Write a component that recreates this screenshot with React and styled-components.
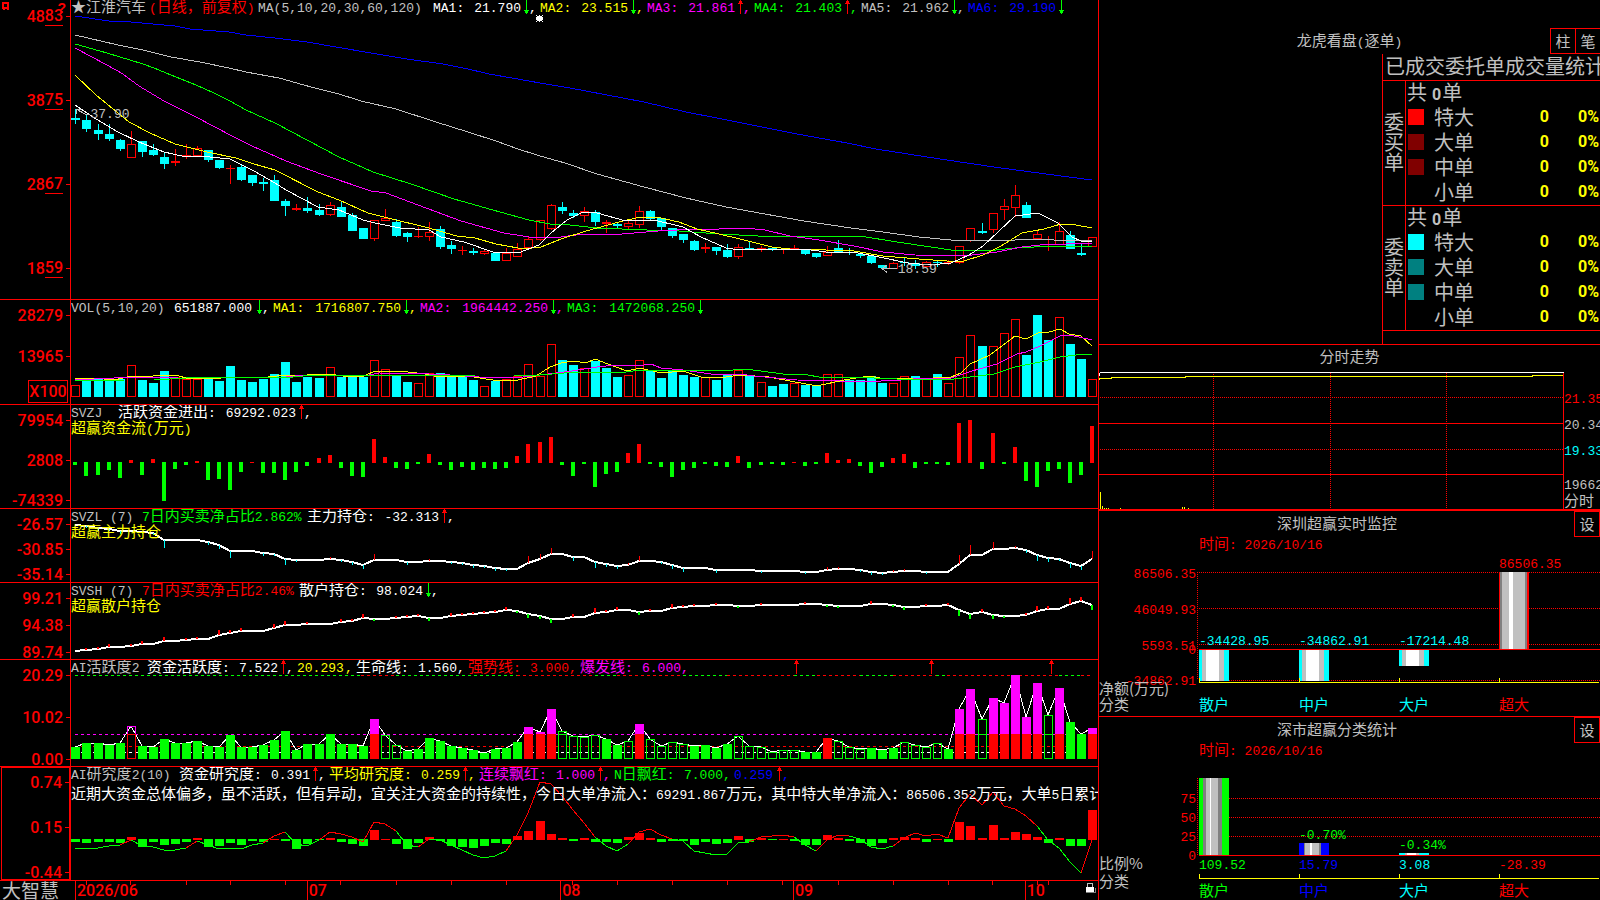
import React from "react"

import styled, { createGlobalStyle, css } from "styled-components"

const RED = "#ff0000"
const GREEN = "#00ff00"
const CYAN = "#00ffff"
const YELLOW = "#ffff00"
const MAGENTA = "#ff00ff"
const BLUE = "#0000ff"
const SILVER = "#c0c0c0"
const GRAY = "#808080"
const WHITE = "#ffffff"

const GlobalStyle = createGlobalStyle`
  * {
    box-sizing: border-box;
  }

  body {
    margin: 0;
    background: #000;
    color: ${SILVER};
    font-family: "Liberation Mono", "Noto Sans CJK SC", monospace;
    font-size: 13px;
    line-height: 17px;
    overflow: hidden;
  }
`

const Page = styled.main`
  display: grid;
  grid-template-columns: minmax(0, 1fr) 501px;
  min-height: 100vh;
`

const Charts = styled.div`
  border-right: 1px solid ${RED};
  min-width: 0;
`

const Panel = styled.section`
  display: grid;
  grid-template-columns: 70px minmax(0, 1fr);
  grid-template-rows: 100%;
  height: ${p => p.$height}px;
  border-bottom: 1px solid ${RED};
`

const Gutter = styled.div`
  position: relative;
  padding-top: ${p => (p.$main ? 6 : 5)}px;
  ${p =>
    p.$framed &&
    css`
      margin-left: 1px;
      padding-top: 4px;
      border: 1px solid ${RED};
    `}
`

const Scale = styled.div`
  display: flex;
  flex-direction: column;
  align-items: flex-end;
  gap: ${p => p.$gap}px;
`

const ScaleLabel = styled.div`
  display: flex;
  align-items: center;
  height: 20px;
  color: ${RED};
  font-family: Roboto, "Liberation Sans", sans-serif;
  font-size: 16px;
  font-weight: 500;

  &::after {
    content: "";
    width: 4px;
    height: 1px;
    margin-left: 3px;
    background: ${RED};
  }
`

const Cents = styled.span`
  height: 20px;
  line-height: 20px;
  border-bottom: 1px solid ${RED};
`

const Multiplier = styled.div`
  width: 40px;
  height: 23px;
  margin: 14px 2px 0 auto;
  border: 1px solid ${RED};
  color: ${RED};
  font-family: Roboto, "Liberation Sans", sans-serif;
  font-size: 16px;
  font-weight: 500;
  line-height: 21px;
  text-align: center;
`

const Plot = styled.div`
  position: relative;
  min-width: 0;
  border-left: 1px solid ${RED};
  overflow: hidden;
`

const Drawing = styled.svg`
  display: block;
  width: 100%;
  height: 100%;
  shape-rendering: crispEdges;
`

const Legend = styled.div`
  position: absolute;
  top: 0;
  left: 0;
  display: flex;
  gap: 3px;
  height: 17px;
  line-height: 17px;
  white-space: pre;
`

const Caption = styled.div`
  position: absolute;
  top: ${p => p.$top}px;
  left: 0;
  color: ${p => p.$color};
  white-space: nowrap;
`

const Han = styled.span`
  font-family: "Noto Sans CJK SC", sans-serif;
  font-size: 15px;
  line-height: 0;
`

const Slot = styled.span`
  display: flex;
  justify-content: space-between;
  width: ${p => p.$width}px;
  margin-right: ${p => (p.$title ? 4 : 0)}px;
  color: ${p => p.$color};
`

const Readout = styled.span`
  display: flex;
  color: ${p => p.$color};
`

const Comma = styled.span`
  width: 8px;
`

const Note = styled.span`
  position: absolute;
  top: ${p => p.$top}px;
  left: ${p => p.$left}%;
  color: ${SILVER};
`

const TimeAxis = styled.div`
  display: grid;
  grid-template-columns: 70px minmax(0, 1fr);
  height: 19px;
`

const Brand = styled.div`
  padding-left: 2px;
  font-family: "Noto Sans CJK SC", sans-serif;
  font-size: 19px;
  line-height: 17px;
  white-space: nowrap;
`

const Months = styled.div`
  position: relative;
  display: flex;
  padding-left: 5px;
`

const Month = styled.div`
  flex: ${p => p.$days} 1 0;
  padding-left: 1px;
  border-left: 1px solid ${RED};
  color: ${RED};
  font-family: Roboto, "Liberation Sans", sans-serif;
  font-size: 16px;
  font-weight: 500;
  line-height: 19px;
`

const Ticks = styled.svg`
  position: absolute;
  top: 0;
  left: 0;
  width: 100%;
  height: 4px;
  shape-rendering: crispEdges;
`

const Lock = styled.svg`
  position: absolute;
  top: 1px;
  right: 2px;
`

const CornerMark = styled.svg`
  position: absolute;
  top: 0;
  left: 0;
`

const Help = styled.span`
  position: absolute;
  top: 0;
  right: 4px;
  color: ${RED};
  font-family: "Liberation Sans", sans-serif;
  font-size: 14px;
  font-weight: 700;
  line-height: 16px;
`

const Side = styled.div`
  min-width: 0;
  overflow: hidden;
`

const SideSection = styled.section`
  height: ${p => p.$height}px;
  border-bottom: ${p => p.$rule}px solid ${RED};
`

const TitleBar = styled.div`
  display: grid;
  grid-template-columns: ${p => (p.$even ? "1fr auto 1fr" : "1fr auto")};
  grid-template-rows: 26px;
  align-items: center;
  padding-top: ${p => p.$pad}px;
`

const Title = styled.h2`
  height: 24px;
  margin: 0;
  font-size: 13px;
  font-weight: 400;
  line-height: 28px;
  text-align: center;
`

const Buttons = styled.div`
  display: flex;
  justify-content: flex-end;
  margin-right: -1px;
`

const Button = styled.button`
  width: 26px;
  height: 26px;
  margin-left: -1px;
  padding: 0;
  border: 1px solid ${RED};
  background: #000;
  color: ${SILVER};
  font-family: "Noto Sans CJK SC", sans-serif;
  font-size: 15px;
  line-height: 22px;
`

const OrderStats = styled.div`
  width: 218px;
  height: 290px;
  margin-left: auto;
  border-left: 1px solid ${RED};
  font-family: "Noto Sans CJK SC", sans-serif;
  font-size: 20px;
  overflow: hidden;
`

const StatsHeading = styled.h3`
  height: 26px;
  margin: 0;
  padding-left: 2px;
  font-size: 20px;
  font-weight: 400;
  line-height: 24px;
  white-space: nowrap;
`

const StatsTable = styled.table`
  width: 217px;
  border-spacing: 0;
  table-layout: fixed;
  line-height: 20px;

  th,
  td {
    height: 25px;
    padding: 0 0 2px;
    font-weight: 400;
    text-align: left;
    white-space: nowrap;
  }

  tbody tr:first-child > * {
    border-top: 1px solid ${RED};
  }

  tbody:last-child {
    box-shadow: 0 1px 0 ${RED};
  }
`

const SideHead = styled.th`
  border-right: 1px solid ${RED};

  span {
    display: block;
    width: 20px;
    margin-left: 1px;
    white-space: normal;
    word-break: break-all;
  }
`

const Total = styled.td`
  && {
    padding-left: 1px;
  }

  b {
    margin: 0 1px 0 5px;
    font-family: Roboto, "Liberation Sans", sans-serif;
    font-size: 16px;
    line-height: 0;
  }
`

const Swatch = styled.span`
  display: block;
  width: 16px;
  height: 16px;
  margin-left: 2px;
  background: ${p => p.$color};
`

const Figure = styled.td`
  && {
    padding: 0 1px 1px 0;
    color: ${YELLOW};
    font-family: Roboto, "Liberation Sans", sans-serif;
    font-size: 16px;
    font-weight: 700;
    text-align: right;
  }
`

const SideDrawing = styled.svg`
  display: block;
  shape-rendering: crispEdges;

  .han {
    font-family: "Noto Sans CJK SC", sans-serif;
    font-size: 15px;
  }
`

const Stamp = styled.div`
  height: 16px;
  padding-left: 100px;
  color: ${RED};
  line-height: 17px;
  white-space: pre;
`

const HAN = /([\u2600-\u9fff\uff00-\uffef]+)/

const Mixed = ({ children }) =>
  children
    .split(HAN)
    .map((part, i) => (i % 2 ? <Han key={i}>{part}</Han> : part))

// han glyphs take 15px, everything else takes an 8px cell
const textWidth = text =>
  [...text].reduce((sum, ch) => sum + (HAN.test(ch) ? 15 : 8), 0)

const Arrow = ({ up }) => (
  <svg width="8" height="15" viewBox="0 0 8 15" shapeRendering="crispEdges">
    {up ? (
      <path d="M5 0h1v1h1v2h1v1H6v10H5V4H3V3h1V1h1z" fill={RED} />
    ) : (
      <path d="M5 0h1v10h2v1H7v2H6v1H5v-1H4v-2H3v-1h2z" fill={GREEN} />
    )}
  </svg>
)

const Value = ({ color, label, value, arrow, last }) => (
  <Readout $color={color}>
    <Slot $color={color} $width={textWidth(label ? label + " " + value : value)}>
      {label && (
        <span>
          <Mixed>{label}</Mixed>
        </span>
      )}
      <span>{value}</span>
    </Slot>
    {arrow && <Arrow up={arrow === "up"} />}
    {!last && <Comma>,</Comma>}
  </Readout>
)

const LegendTitle = ({ children }) => (
  <Slot $title $color={SILVER} $width={textWidth(children)}>
    <span>
      <Mixed>{children}</Mixed>
    </span>
  </Slot>
)

const barX = i => Math.round(75.4 + i * 11.05)

const Canvas = ({ top, height, children }) => (
  <Drawing viewBox={`71 ${top} 1027 ${height}`} preserveAspectRatio="none">
    {children}
  </Drawing>
)

const Line = ({ points, color, width = 1 }) => (
  <polyline points={points} fill="none" stroke={color} strokeWidth={width} />
)

const Box = ({ i, top, bottom, color }) => (
  <rect
    x={barX(i) - 3.5}
    y={top + 0.5}
    width={8}
    height={Math.max(bottom - top - 1, 1)}
    fill="none"
    stroke={color}
  />
)

// direction, high, body top, body bottom, low
const candles = [
  ["c", 109, 118, 120, 124], ["c", 115, 120, 129, 132], ["c", 124, 130, 134, 140],
  ["c", 124, 134, 139, 141], ["c", 139, 140, 149, 151], ["r", 131, 144, 158, 158],
  ["c", 141, 141, 152, 157], ["c", 144, 150, 155, 156], ["c", 153, 157, 164, 169],
  ["r", 149, 161, 163, 166], ["r", 144, 155, 157, 159], ["r", 146, 148, 156, 157],
  ["c", 150, 150, 160, 162], ["c", 160, 160, 168, 169], ["r", 165, 168, 169, 184],
  ["c", 165, 167, 180, 181], ["c", 175, 175, 183, 186], ["c", 178, 182, 184, 191],
  ["c", 175, 180, 201, 201], ["c", 199, 201, 206, 216], ["r", 204, 208, 210, 211],
  ["c", 197, 208, 211, 213], ["c", 204, 210, 215, 216], ["r", 202, 205, 215, 216],
  ["c", 201, 207, 217, 217], ["c", 213, 215, 231, 231], ["c", 228, 228, 239, 239],
  ["r", 220, 220, 239, 241], ["r", 209, 218, 221, 221], ["c", 219, 222, 236, 237],
  ["c", 232, 233, 237, 242], ["r", 227, 236, 237, 238], ["r", 222, 232, 237, 241],
  ["c", 226, 229, 247, 249], ["c", 241, 245, 249, 254], ["r", 246, 250, 251, 255],
  ["c", 248, 251, 253, 255], ["r", 249, 251, 254, 255], ["c", 253, 253, 261, 261],
  ["r", 248, 253, 261, 261], ["r", 243, 249, 257, 257], ["r", 236, 239, 248, 248],
  ["r", 220, 220, 240, 241], ["r", 204, 205, 229, 230], ["c", 202, 207, 211, 214],
  ["c", 210, 213, 216, 218], ["r", 207, 211, 216, 222], ["c", 210, 212, 222, 226],
  ["r", 220, 222, 224, 233], ["c", 222, 224, 226, 229], ["r", 220, 223, 227, 229],
  ["r", 206, 211, 225, 228], ["c", 210, 211, 219, 220], ["c", 218, 218, 227, 230],
  ["c", 228, 228, 236, 238], ["c", 234, 234, 240, 243], ["c", 240, 241, 250, 251],
  ["r", 243, 247, 249, 253], ["c", 247, 247, 251, 255], ["c", 244, 250, 257, 258],
  ["r", 244, 247, 257, 259], ["c", 241, 248, 249, 249], ["r", 246, 248, 249, 252],
  ["c", 247, 248, 249, 251], ["r", 248, 249, 250, 254], ["r", 245, 248, 249, 249],
  ["c", 249, 249, 254, 255], ["c", 253, 253, 257, 258], ["r", 246, 252, 256, 256],
  ["c", 240, 248, 252, 252], ["c", 248, 252, 253, 255], ["c", 253, 254, 256, 258],
  ["c", 256, 256, 263, 264], ["c", 265, 265, 268, 268], ["r", 262, 263, 269, 269],
  ["c", 258, 262, 263, 266], ["c", 260, 263, 266, 269], ["r", 261, 262, 267, 267],
  ["c", 261, 262, 263, 267], ["r", 260, 262, 263, 265], ["r", 246, 246, 263, 264],
  ["r", 228, 228, 241, 242], ["c", 223, 231, 233, 234], ["r", 213, 213, 230, 233],
  ["r", 199, 206, 210, 220], ["r", 185, 195, 208, 217], ["c", 202, 205, 218, 218],
  ["r", 230, 234, 239, 239], ["r", 236, 244, 245, 251], ["r", 222, 231, 245, 245],
  ["c", 231, 235, 249, 249], ["c", 244, 253, 255, 256], ["r", 237, 237, 247, 247],
]

const averages = [
  [BLUE, "75,16 109,21 131,22 175,26 190,29 229,32 246,35 275,38 307,42 336,47 371,53 407,59 443,64 468,69 489,74 529,81 540,83 570,88 644,102 686,112 722,119 797,134 847,143 876,149 940,159 1001,168 1061,176 1092,180"],
  [SILVER, "75,35 118,45 143,50 171,57 200,62 229,68 246,72 279,78 311,87 339,94 361,101 396,109 436,122 468,132 496,141 518,149 540,156 565,163 597,174 644,187 686,198 726,207 776,216 804,221 851,228 883,232 919,237 951,240 1015,240 1036,239 1054,240 1092,240"],
  [GREEN, "75,44 107,53 143,64 154,68 171,75 196,85 214,93 230,101 246,110 275,123 307,140 339,157 373,172 411,184 454,199 500,212 529,220 550,224 561,224 597,228 647,230 679,231 719,234 758,236 860,236 897,242 951,250 986,251 1015,248 1054,246 1092,246"],
  [MAGENTA, "75,48 107,65 123,74 139,86 164,101 196,117 232,136 252,146 286,161 321,174 371,191 386,193 418,205 461,221 504,233 529,237 540,238 561,237 583,234 622,234 658,231 697,229 719,229 744,228 765,230 790,236 819,240 854,246 883,252 915,255 951,256 972,255 997,252 1022,247 1040,245 1092,243"],
  [YELLOW, "75,75 96,95 118,113 129,122 150,133 175,144 207,152 236,158 254,164 275,170 318,192 339,200 368,213 396,220 425,227 457,236 475,238 496,244 518,248 532,248 541,247 561,239 586,231 619,222 640,217 656,217 679,222 697,229 719,234 740,239 772,247 790,249 826,250 854,251 883,256 919,259 961,262 983,255 1001,246 1022,233 1044,229 1061,224 1076,225 1092,228"],
  [WHITE, "75,105 96,119 118,132 139,142 164,152 186,157 200,156 230,159 254,171 275,183 286,190 318,207 339,210 363,220 375,223 400,228 429,230 441,237 464,242 493,252 518,253 539,245 551,233 567,220 583,212 597,213 626,221 654,220 683,227 701,237 726,248 740,250 772,249 804,249 826,252 858,253 879,257 908,263 929,265 951,263 969,255 983,246 1015,216 1038,213 1058,223 1072,237 1081,241 1092,241"],
]

// positive closes up (red), negative closes down (cyan)
const volumes = [
  12, -17, -18, -17, -18, 32, -17, -14, -26, 20, 18, 18, -19, -16, -31, -17,
  -15, -18, -23, -35, -15, -20, -19, 30, -20, -20, -20, 37, 28, -22, -15, 14,
  24, -24, -20, -20, -17, 11, -16, 18, 21, 33, 21, 53, -37, -32, 29, -36, -29,
  -20, 22, 37, -26, -19, -26, -22, -20, 20, -17, -22, 27, -21, 15, -11, -13,
  14, -12, -11, 23, 23, -17, -17, -21, -14, 14, 21, -21, 19, -23, 14, 40, 62,
  -51, 51, 64, 78, -42, -82, -57, 80, -53, -38, 18,
]

const volumeAverages = [
  [YELLOW, "75,378 93,378 114,380 132,376 146,377 161,375 179,376 186,378 221,378 268,377 286,375 307,375 329,374 343,376 364,376 375,371 400,371 425,374 439,377 468,376 486,379 500,381 518,380 536,376 550,367 561,363 574,361 586,363 595,359 608,364 627,371 640,368 661,373 683,371 701,377 726,377 740,375 769,377 790,381 817,386 844,380 869,376 886,379 933,378 951,377 961,373 970,364 990,355 1015,336 1026,339 1038,333 1049,332 1060,329 1069,334 1081,336 1092,346"],
  [MAGENTA, "75,380 114,378 179,377 214,377 271,378 286,377 304,375 336,375 364,376 379,373 429,374 450,375 479,377 514,378 532,376 572,371 597,367 615,365 644,365 651,364 661,368 683,370 711,374 740,374 754,376 797,380 840,381 861,382 901,380 926,378 951,378 972,371 997,364 1017,354 1026,352 1040,346 1060,336 1070,335 1092,340"],
  [GREEN, "75,381 125,380 154,380 186,378 214,377 293,377 314,375 371,375 429,375 475,376 514,376 540,375 576,372 626,372 640,370 686,370 733,370 744,369 761,371 783,374 808,375 819,377 851,377 897,379 954,379 994,374 1015,367 1040,362 1060,357 1076,355 1092,354"],
]

const flows = [
  -3, -14, -13, -8, -16, 3, -13, 4, -39, -7, -3, 2, -18, -17, -28, -10, 1, -11,
  -11, -18, -10, -4, 5, 8, -6, -14, -15, 24, 6, -6, -7, -2, 9, -3, -8, -5, -8,
  -6, -7, -6, 7, 19, 21, 26, -3, -14, -2, -25, -12, -10, 10, 19, -2, -5, -15,
  -8, -6, -2, -4, -5, 7, -6, -3, -2, -3, 1, -4, -2, 10, 3, 4, -4, -11, -5, 5,
  9, -6, -2, -2, -3, 40, 43, -7, 30, -2, 16, -19, -25, -9, -7, -21, -13, 37,
]

const mainHolding = [
  525, 526, 528, 529, 531, 531, 532, 533, 540, 540, 540, 540, 542, 545, 551,
  551, 551, 553, 554, 559, 560, 560, 560, 559, 560, 562, 565, 560, 560, 560,
  562, 562, 561, 561, 562, 563, 565, 566, 568, 569, 569, 563, 559, 554, 554,
  557, 557, 562, 564, 566, 565, 561, 561, 562, 565, 568, 568, 568, 570, 570,
  570, 570, 571, 571, 571, 571, 572, 572, 570, 569, 569, 570, 572, 573, 572,
  571, 571, 572, 572, 572, 564, 555, 555, 549, 549, 548, 550, 555, 558, 559,
  563, 566, 559,
]

const retailHolding = [
  651, 650, 649, 647, 647, 646, 644, 644, 641, 641, 640, 639, 639, 635, 633,
  631, 631, 631, 628, 625, 625, 624, 624, 624, 622, 621, 618, 619, 619, 618,
  617, 616, 618, 618, 616, 615, 614, 613, 612, 610, 611, 614, 616, 619, 619,
  617, 617, 613, 612, 610, 610, 612, 611, 611, 608, 607, 606, 606, 605, 605,
  606, 606, 605, 605, 605, 605, 604, 604, 605, 606, 606, 606, 604, 604, 605,
  607, 607, 606, 606, 605, 610, 614, 612, 615, 616, 616, 615, 611, 609, 609,
  604, 601, 605,
]

// g solid green, G hollow green, R solid red, H hollow red
const activity =
  "g12 g16 g16 g14 g16 H33 g13 g12 g20 g16 g16 g18 g13 g12 g24 g12 g12 g14 g19 g28 g9 g15 g15 g25 g15 g15 g13 R40 G24 G14 g8 g10 g21 g18 g13 g11 g9 g6 g10 g11 g17 R32 R27 R50 G28 G23 G22 G24 g20 g14 G18 R35 G20 G13 G17 G15 g13 g14 g11 g15 G23 G13 G12 G7 G9 G9 g7 g7 R21 G18 G12 G10 g11 g9 g11 G17 G14 G12 G16 g10 R50 R70 G40 R61 R56 R84 R42 R76 G44 R71 g37 g25 R31"
    .split(" ")
    .map(s => ({ kind: s[0], h: Number(s.slice(1)) }))

const crestStops = [
  75, 361, 396, 517, 595, 617, 683, 727, 794, 817, 860, 893, 936, 947, 1059,
  1081, 1092,
]

const research = [
  -3, -4, -3, -3, -4, 3, -8, -3, -6, -5, -3, 2, -8, -7, -4, -6, -2, -3, 1, -2,
  -10, -5, -1, 2, -3, -5, -7, 10, 1, -5, -10, -4, 3, -2, -7, -8, -9, -7, -4,
  -5, 4, 9, 19, 6, 2, -2, 2, -3, -3, -4, 3, 7, 2, -3, -2, -2, -6, -3, -5, -4,
  4, -3, 2, -1, 1, -2, -6, -6, 5, 2, -2, -4, -7, -4, 2, 3, 2, -3, 1, -3, 18,
  14, 2, 15, 2, 8, 6, 3, -4, 2, -7, -7, 30,
]

const researchLine = [
  848, 849, 848, 846, 845, 840, 846, 847, 850, 850, 848, 841, 845, 849, 848,
  849, 845, 843, 836, 832, 844, 846, 840, 832, 834, 837, 842, 822, 824, 831,
  845, 847, 839, 840, 845, 850, 855, 858, 856, 851, 835, 813, 782, 784, 796,
  810, 823, 837, 846, 851, 844, 832, 829, 835, 839, 841, 851, 853, 855, 854,
  843, 842, 837, 836, 835, 837, 845, 851, 840, 835, 836, 839, 847, 849, 846,
  838, 833, 836, 834, 838, 808, 794, 805, 792, 806, 809, 816, 826, 840, 848,
  862, 873, 840,
]

const redSpans = [
  [4, 5], [10, 11], [17, 19], [22, 29], [31, 32], [39, 47], [50, 54], [61, 65],
  [67, 70], [74, 87], [91, 92],
]

const Axis = ({ labels, gap }) => (
  <Scale $gap={gap}>
    {labels.map(label => (
      <ScaleLabel key={label}>{label}</ScaleLabel>
    ))}
  </Scale>
)

const PricePanel = () => (
  <Panel $height={300}>
    <Gutter $main>
      <CornerMark width="12" height="12" shapeRendering="crispEdges">
        <path d="M3 3h5v5H3zM3 9h2M7 9h2" fill="none" stroke={RED} strokeWidth="2" />
      </CornerMark>
      <Help>?</Help>
      <Scale $gap={64}>
        {["48 83", "38 75", "28 67", "18 59"].map(price => (
          <ScaleLabel key={price}>
            {price.slice(0, 2)}
            <Cents>{price.slice(3)}</Cents>
          </ScaleLabel>
        ))}
      </Scale>
    </Gutter>
    <Plot>
      <Canvas top={0} height={299}>
        {candles.map(([dir, high, top, bottom, low], i) => {
          const x = barX(i)
          const color = dir === "c" ? CYAN : RED
          const flat = dir === "c" || bottom - top < 3
          return (
            <g key={i}>
              <rect x={x} y={high} width={1} height={top - high} fill={color} />
              <rect x={x} y={bottom} width={1} height={low - bottom} fill={color} />
              {flat ? (
                <rect x={x - 4} y={top} width={9} height={bottom - top} fill={color} />
              ) : (
                <Box i={i} top={top} bottom={bottom} color={color} />
              )}
            </g>
          )
        })}
        {averages.map(([color, points]) => (
          <Line key={color} color={color} points={points} />
        ))}
        <path
          d="M76 109l9 5h5M76 109v5M76 109h5M897 268.5h-15M887 265l-5 3.5 5 4"
          fill="none"
          stroke={SILVER}
        />
        <path
          d="M537 16h5v5h-5zM536 17h7v3h-7zM539 15h1v7h-1zM536 15h1v1h-1zM542 15h1v1h-1zM536 21h1v1h-1zM542 21h1v1h-1z"
          fill={WHITE}
        />
      </Canvas>
      <Legend>
        <Slot $color={SILVER} $width={75}>
          <span>
            <Mixed>★江淮汽车</Mixed>
          </span>
        </Slot>
        <Slot $color={RED} $width={106}>
          <span>
            <Mixed>(日线，前复权)</Mixed>
          </span>
        </Slot>
        <LegendTitle>MA(5,10,20,30,60,120)</LegendTitle>
        <Value color={WHITE} label="MA1:" value="21.790" arrow="down" />
        <Value color={YELLOW} label="MA2:" value="23.515" arrow="down" />
        <Value color={MAGENTA} label="MA3:" value="21.861" arrow="up" />
        <Value color={GREEN} label="MA4:" value="21.403" arrow="up" />
        <Value color={SILVER} label="MA5:" value="21.962" arrow="down" />
        <Value color={BLUE} label="MA6:" value="29.190" arrow="down" last />
      </Legend>
      <Note $top={106} $left={1.9}>
        37.90
      </Note>
      <Note $top={261} $left={80.5}>
        18.59
      </Note>
    </Plot>
  </Panel>
)

const VolumePanel = () => (
  <Panel $height={105}>
    <Gutter>
      <Axis labels={["28279", "13965"]} gap={21} />
      <Multiplier>X100</Multiplier>
    </Gutter>
    <Plot>
      <Canvas top={300} height={104}>
        {volumes.map((v, i) =>
          v > 0 ? (
            <Box key={i} i={i} top={397 - v} bottom={397} color={RED} />
          ) : (
            <rect key={i} x={barX(i) - 4} y={397 + v} width={9} height={-v} fill={CYAN} />
          )
        )}
        {volumeAverages.map(([color, points]) => (
          <Line key={color} color={color} points={points} />
        ))}
      </Canvas>
      <Legend>
        <LegendTitle>VOL(5,10,20)</LegendTitle>
        <Value color={WHITE} value="651887.000" arrow="down" />
        <Value color={YELLOW} label="MA1:" value="1716807.750" arrow="down" />
        <Value color={MAGENTA} label="MA2:" value="1964442.250" arrow="down" />
        <Value color={GREEN} label="MA3:" value="1472068.250" arrow="down" last />
      </Legend>
    </Plot>
  </Panel>
)

const FlowPanel = () => (
  <Panel $height={104}>
    <Gutter>
      <Axis labels={["79954", "2808", "-74339"]} gap={20} />
    </Gutter>
    <Plot>
      <Canvas top={405} height={103}>
        {flows.map((v, i) => (
          <rect
            key={i}
            x={barX(i) - 2}
            y={v > 0 ? 463 - v : 462}
            width={4}
            height={Math.abs(v)}
            fill={v > 0 ? RED : GREEN}
          />
        ))}
      </Canvas>
      <Legend>
        <LegendTitle>{"SVZJ "}</LegendTitle>
        <Value color={WHITE} label="活跃资金进出:" value="69292.023" arrow="up" />
      </Legend>
      <Caption $top={16} $color={YELLOW}>
        <Mixed>超赢资金流(万元)</Mixed>
      </Caption>
    </Plot>
  </Panel>
)

const Trend = ({ data, down, tick }) => (
  <>
    <Line
      color={WHITE}
      width={2}
      points={data.map((y, i) => `${barX(i)},${y}`).join(" ")}
    />
    {data.map((y, i) => {
      const step = i ? y - data[i - 1] : 0
      if (!step) return null
      const length = Math.abs(step) + 1
      return (
        <rect
          key={i}
          x={barX(i) - (tick - 1)}
          y={step > 0 ? y : y - length}
          width={tick}
          height={length}
          fill={step > 0 ? down : RED}
        />
      )
    })}
  </>
)

const MainHoldingPanel = () => (
  <Panel $height={74}>
    <Gutter>
      <Axis labels={["-26.57", "-30.85", "-35.14"]} gap={5} />
    </Gutter>
    <Plot>
      <Canvas top={509} height={73}>
        <Trend data={mainHolding} down={CYAN} tick={1} />
      </Canvas>
      <Legend>
        <LegendTitle>SVZL (7)</LegendTitle>
        <Slot $color={GREEN} $width={162}>
          <span>
            <Mixed>7日内买卖净占比2.862%</Mixed>
          </span>
        </Slot>
        <Value color={WHITE} label="主力持仓:" value="-32.313" arrow="up" />
      </Legend>
      <Caption $top={16} $color={YELLOW}>
        <Mixed>超赢主力持仓</Mixed>
      </Caption>
    </Plot>
  </Panel>
)

const RetailHoldingPanel = () => (
  <Panel $height={77}>
    <Gutter>
      <Axis labels={["99.21", "94.38", "89.74"]} gap={7} />
    </Gutter>
    <Plot>
      <Canvas top={583} height={76}>
        <Trend data={retailHolding} down={GREEN} tick={2} />
      </Canvas>
      <Legend>
        <LegendTitle>SVSH (7)</LegendTitle>
        <Slot $color={RED} $width={154}>
          <span>
            <Mixed>7日内买卖净占比2.46%</Mixed>
          </span>
        </Slot>
        <Value color={WHITE} label="散户持仓:" value="98.024" arrow="down" />
      </Legend>
      <Caption $top={16} $color={YELLOW}>
        <Mixed>超赢散户持仓</Mixed>
      </Caption>
    </Plot>
  </Panel>
)

const ActivityBar = ({ kind, h, i }) => {
  const x = barX(i) - 4
  const top = 759 - h
  if (kind === "g") {
    return <rect x={x} y={top} width={9} height={h} fill={GREEN} />
  }
  if (kind === "R") {
    const base = Math.min(h, 25)
    return (
      <>
        <rect x={x} y={top} width={9} height={h - base} fill={MAGENTA} />
        <rect x={x} y={759 - base} width={9} height={base} fill={RED} />
      </>
    )
  }
  if (kind === "H") {
    return (
      <>
        <Box i={i} top={734} bottom={759} color={RED} />
        <path d={`M${x + 0.5} 734V${top + 0.5}h8V734`} fill="none" stroke={MAGENTA} />
      </>
    )
  }
  return (
    <>
      <Box i={i} top={top} bottom={759} color={GREEN} />
      {h > 25 && <rect x={x} y={734} width={9} height={1} fill={GREEN} />}
    </>
  )
}

const ActivityPanel = () => (
  <Panel $height={107}>
    <Gutter>
      <Axis labels={["20.29", "10.02", "0.00"]} gap={22} />
    </Gutter>
    <Plot>
      <Canvas top={660} height={106}>
        {crestStops.slice(1).map((x, i) => (
          <path
            key={x}
            d={`M${crestStops[i]} 675.5H${x}`}
            stroke={i % 2 ? RED : GREEN}
            strokeDasharray="3 3"
          />
        ))}
        <path d="M75 734.5H1097" stroke={MAGENTA} strokeDasharray="3 3" />
        <path d="M75 746.5H1097" stroke={RED} strokeDasharray="3 3" />
        <path d="M75 752.5H1097" stroke={WHITE} strokeDasharray="3 3" />
        <Line
          color={WHITE}
          points={activity.map(({ h }, i) => `${barX(i)},${759 - h}`).join(" ")}
        />
        {activity.map((bar, i) => (
          <ActivityBar key={i} i={i} {...bar} />
        ))}
        {[796, 931, 1051].map(x => (
          <path
            key={x}
            d={`M${x} 660h1v1h1v2h1v1h-2v10h-1v-10h-2v-1h1v-2h1z`}
            fill={RED}
          />
        ))}
      </Canvas>
      <Legend>
        <LegendTitle>AI活跃度2</LegendTitle>
        <Value color={WHITE} label="资金活跃度:" value="7.522" arrow="up" />
        <Value color={YELLOW} value="20.293" />
        <Value color={WHITE} label="生命线:" value="1.560" />
        <Value color={RED} label="强势线:" value="3.000" />
        <Value color={MAGENTA} label="爆发线:" value="6.000" />
      </Legend>
    </Plot>
  </Panel>
)

const ResearchPanel = () => (
  <Panel $height={114}>
    <Gutter $framed>
      <Axis labels={["0.74", "0.15", "-0.44"]} gap={25} />
    </Gutter>
    <Plot>
      <Caption $top={20} $color={WHITE}>
        <Mixed>
          近期大资金总体偏多，虽不活跃，但有异动，宜关注大资金的持续性，今日大单净流入：69291.867万元，其中特大单净流入：86506.352万元，大单5日累计
        </Mixed>
      </Caption>
      <Canvas top={767} height={113}>
        {research.map((v, i) => (
          <rect
            key={i}
            x={barX(i) - 4}
            y={v > 0 ? 840 - v : 839}
            width={9}
            height={Math.abs(v)}
            fill={v > 0 ? RED : GREEN}
          />
        ))}
        {researchLine.slice(1).map((y, i) => (
          <path
            key={i}
            d={`M${barX(i)} ${researchLine[i]}L${barX(i + 1)} ${y}`}
            stroke={redSpans.some(([a, b]) => i >= a && i < b) ? RED : GREEN}
          />
        ))}
      </Canvas>
      <Legend>
        <LegendTitle>AI研究度2(10)</LegendTitle>
        <Value color={WHITE} label="资金研究度:" value="0.391" arrow="up" />
        <Value color={YELLOW} label="平均研究度:" value="0.259" arrow="up" />
        <Value color={MAGENTA} label="连续飘红:" value="1.000" arrow="up" />
        <Value color={GREEN} label="N日飘红:" value="7.000" />
        <Value color={BLUE} value="0.259" arrow="up" />
      </Legend>
    </Plot>
  </Panel>
)

const Timeline = () => (
  <TimeAxis>
    <Brand>大智慧</Brand>
    <Months>
      <Month $days={232}>2026/06</Month>
      <Month $days={254}>07</Month>
      <Month $days={233}>08</Month>
      <Month $days={232}>09</Month>
      <Month $days={72}>10</Month>
      <Ticks viewBox="70 0 1028 4" preserveAspectRatio="none">
        {[86, 130, 186, 230, 285, 340, 396, 451, 506, 572, 617, 672, 727, 782, 838, 893, 948, 992, 1037, 1048].map(x => (
          <rect key={x} x={x} y={0} width={1} height={4} fill={RED} />
        ))}
      </Ticks>
      <Lock width="11" height="12" shapeRendering="crispEdges">
        <path d="M2.5 5V1.5h5V5" fill="none" stroke={SILVER} />
        <path d="M1 5h8v5H1z" fill={WHITE} />
        <path d="M1 10.5h9.5V6" fill="none" stroke={GRAY} />
      </Lock>
    </Months>
  </TimeAxis>
)

const orders = [
  { side: "委买单", colors: [RED, "#800000", "#800000", "#000"] },
  { side: "委卖单", colors: [CYAN, "#008080", "#008080", "#000"] },
]

const OrderTable = () => (
  <OrderStats>
    <StatsHeading id="order-stats">已成交委托单成交量统计</StatsHeading>
    <StatsTable aria-labelledby="order-stats">
      <colgroup>
        <col width="23" />
        <col width="28" />
        <col />
        <col width="40" />
        <col width="50" />
      </colgroup>
      {orders.map(({ side, colors }) => (
        <tbody key={side}>
          <tr>
            <SideHead rowSpan={5} scope="rowgroup">
              <span>{side}</span>
            </SideHead>
            <Total colSpan={4}>
              共<b>0</b>单
            </Total>
          </tr>
          {["特大", "大单", "中单", "小单"].map((size, i) => (
            <tr key={size}>
              <td>
                <Swatch $color={colors[i]} />
              </td>
              <th scope="row">{size}</th>
              <Figure>0</Figure>
              <Figure>0%</Figure>
            </tr>
          ))}
        </tbody>
      ))}
    </StatsTable>
  </OrderStats>
)

const Intraday = () => (
  <SideDrawing width="501" height="140" viewBox="1099 369 501 140">
    <g fill="none" stroke={RED}>
      <path d="M1099 423.5h464M1099 474.5h464M1563.5 372v137" />
      <path
        d="M1100 397.5h463M1100 449.5h463M1213.5 374v135M1330.5 373v136M1446.5 373v136"
        strokeDasharray="1 1"
      />
    </g>
    <path
      d="M1099.5 380v-1.5h11.5v-1h74v-1h347v-1h31"
      fill="none"
      stroke={YELLOW}
    />
    <path d="M1099.5 376v-2l1-1.5h463" fill="none" stroke={WHITE} />
    <path
      d="M1100.5 492v17M1102.5 506v3M1104.5 508v1M1106.5 508v1M1108.5 508v1M1120.5 508v1M1182.5 507v2M1184.5 507v2M1188.5 508v1"
      stroke={YELLOW}
    />
    <text x="1564" y="403" fill={RED}>21.35</text>
    <text x="1564" y="429" fill={SILVER}>20.34</text>
    <text x="1564" y="455" fill={CYAN}>19.33</text>
    <text x="1564" y="489" fill={SILVER}>19662</text>
    <text x="1564" y="506" fill={SILVER} className="han">分时</text>
  </SideDrawing>
)

// a bar built from vertical stripes: [colour, width]
const Cylinder = ({ x, top, height, stripes }) => {
  let left = x
  return stripes.map(([color, width], i) => {
    const start = left
    left += width
    return <rect key={i} x={start} y={top} width={width} height={height} fill={color} />
  })
}

const fallStripes = [[CYAN, 3], [SILVER, 4], [WHITE, 13], [SILVER, 5], [CYAN, 5]]
const riseStripes = [
  [RED, 1], [GRAY, 2], [SILVER, 7], [WHITE, 4], [SILVER, 12], [GRAY, 2], [RED, 2],
]

const AmountChart = () => (
  <SideDrawing width="501" height="163" viewBox="1099 553 501 163">
    <path
      d="M1199 572.5h401M1199 608.5h401M1199 644.5h401M1199 680.5h401M1197.5 572v108"
      stroke={RED}
      strokeDasharray="1 1"
    />
    <Cylinder x={1199} top={650} height={31} stripes={fallStripes} />
    <Cylinder x={1299} top={650} height={31} stripes={fallStripes} />
    <Cylinder x={1399} top={650} height={16} stripes={fallStripes} />
    <Cylinder x={1499} top={572} height={77} stripes={riseStripes} />
    <path d="M1199 649.5h401" stroke={RED} />
    <path
      d="M1199.5 678v4.5H1599M1299.5 678v4M1399.5 678v4M1499.5 678v4"
      fill="none"
      stroke={YELLOW}
    />
    <g fill={RED} textAnchor="end">
      <text x="1196" y="578">86506.35</text>
      <text x="1196" y="614">46049.93</text>
      <text x="1196" y="650">5593.51</text>
      <text x="1196" y="654">0</text>
      <text x="1196" y="685">-34862.91</text>
    </g>
    <g fill={CYAN}>
      <text x="1199" y="645">-34428.95</text>
      <text x="1299" y="645">-34862.91</text>
      <text x="1399" y="645">-17214.48</text>
      <text x="1499" y="568" fill={RED}>86506.35</text>
    </g>
    <g fill={SILVER} className="han">
      <text x="1099" y="694">净额(万元)</text>
      <text x="1099" y="710">分类</text>
      <text x="1199" y="710" fill={CYAN}>散户</text>
      <text x="1299" y="710" fill={CYAN}>中户</text>
      <text x="1399" y="710" fill={CYAN}>大户</text>
      <text x="1499" y="710" fill={RED}>超大</text>
    </g>
  </SideDrawing>
)

const RatioChart = () => (
  <SideDrawing width="501" height="141" viewBox="1099 759 501 141">
    <path
      d="M1199 798.5h401M1199 817.5h401M1199 836.5h401M1197.5 778v77"
      stroke={RED}
      strokeDasharray="1 1"
    />
    <Cylinder
      x={1199}
      top={778}
      height={77}
      stripes={[[GREEN, 4], [GRAY, 3], [SILVER, 4], [WHITE, 1], [SILVER, 7], [GRAY, 4], [GREEN, 7]]}
    />
    <Cylinder
      x={1299}
      top={843}
      height={12}
      stripes={[[BLUE, 5], [GRAY, 1], [SILVER, 5], [WHITE, 2], [SILVER, 7], [GRAY, 2], [BLUE, 8]]}
    />
    <Cylinder
      x={1399}
      top={853}
      height={2}
      stripes={[[CYAN, 6], [SILVER, 2], [WHITE, 9], [SILVER, 3], [CYAN, 10]]}
    />
    <path d="M1199 855.5h401" stroke={RED} />
    <path
      d="M1199.5 874v4.5H1599M1299.5 874v4M1399.5 874v4M1499.5 874v4"
      fill="none"
      stroke={YELLOW}
    />
    <g fill={RED} textAnchor="end">
      <text x="1196" y="803">75</text>
      <text x="1196" y="822">50</text>
      <text x="1196" y="841">25</text>
      <text x="1196" y="860">0</text>
    </g>
    <text x="1299" y="839" fill={GREEN}>-0.70%</text>
    <text x="1399" y="849" fill={GREEN}>-0.34%</text>
    <text x="1199" y="869" fill={GREEN}>109.52</text>
    <text x="1299" y="869" fill={BLUE}>15.79</text>
    <text x="1399" y="869" fill={CYAN}>3.08</text>
    <text x="1499" y="869" fill={RED}>-28.39</text>
    <g fill={SILVER} className="han">
      <text x="1099" y="869">比例%</text>
      <text x="1099" y="887">分类</text>
      <text x="1199" y="896" fill={GREEN}>散户</text>
      <text x="1299" y="896" fill={BLUE}>中户</text>
      <text x="1399" y="896" fill={CYAN}>大户</text>
      <text x="1499" y="896" fill={RED}>超大</text>
    </g>
  </SideDrawing>
)

const Monitor = ({ title, height, rule, children }) => (
  <SideSection $height={height} $rule={rule}>
    <TitleBar $pad={0}>
      <Title>
        <Mixed>{title}</Mixed>
      </Title>
      <Button type="button">设</Button>
    </TitleBar>
    <Stamp>
      <Mixed>时间: 2026/10/16</Mixed>
    </Stamp>
    {children}
  </SideSection>
)

const App = () => (
  <>
    <GlobalStyle />
    <Page>
      <Charts>
        <PricePanel />
        <VolumePanel />
        <FlowPanel />
        <MainHoldingPanel />
        <RetailHoldingPanel />
        <ActivityPanel />
        <ResearchPanel />
        <Timeline />
      </Charts>
      <Side>
        <SideSection $height={345} $rule={1}>
          <TitleBar $even $pad={28}>
            <span />
            <Title>
              <Mixed>龙虎看盘(逐单)</Mixed>
            </Title>
            <Buttons>
              <Button type="button">柱</Button>
              <Button type="button">笔</Button>
            </Buttons>
          </TitleBar>
          <OrderTable />
        </SideSection>
        <SideSection $height={166} $rule={2}>
          <Title>
            <Mixed>分时走势</Mixed>
          </Title>
          <Intraday />
        </SideSection>
        <Monitor title="深圳超赢实时监控" height={206} rule={1}>
          <AmountChart />
        </Monitor>
        <Monitor title="深市超赢分类统计" height={183} rule={0}>
          <RatioChart />
        </Monitor>
      </Side>
    </Page>
  </>
)

export default App
